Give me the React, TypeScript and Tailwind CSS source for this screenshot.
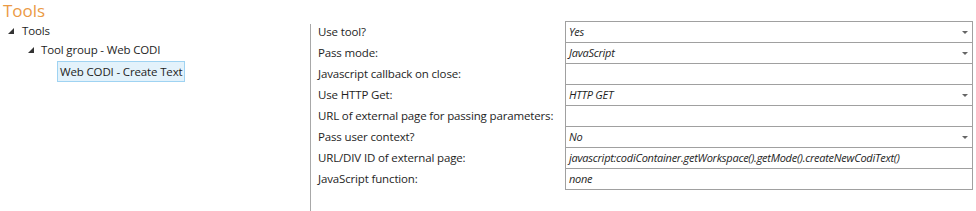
import React from "react";

const rows: { label: string; value: string; dropdown: boolean }[] = [
  { label: "Use tool?", value: "Yes", dropdown: true },
  { label: "Pass mode:", value: "JavaScript", dropdown: true },
  { label: "Javascript callback on close:", value: "", dropdown: false },
  { label: "Use HTTP Get:", value: "HTTP GET", dropdown: true },
  { label: "URL of external page for passing parameters:", value: "", dropdown: false },
  { label: "Pass user context?", value: "No", dropdown: true },
  { label: "URL/DIV ID of external page:", value: "javascript:codiContainer.getWorkspace().getMode().createNewCodiText()", dropdown: false },
  { label: "JavaScript function:", value: "none", dropdown: false },
];

function Expander() {
  return (
    <svg width="6" height="6" viewBox="0 0 6 6" className="shrink-0">
      <polygon points="6,0 6,6 0,6" fill="#333" />
    </svg>
  );
}

function Arrow() {
  return (
    <svg width="6" height="3" viewBox="0 0 6 3" className="shrink-0">
      <polygon points="0,0 6,0 3,3" fill="#666" />
    </svg>
  );
}

export default function App() {
  return (
    <div className="w-[976px] h-[211px] bg-white overflow-hidden text-[#1e1e1e] font-['Open_Sans',sans-serif]">
      <div className="h-[21px] pl-[3px] text-[17px] leading-[22px] text-[#eb9a45]">Tools</div>
      <div className="flex h-[190px]">
        <div className="w-[310px] shrink-0 text-[11.5px] tracking-[-0.15px]">
          <div className="flex items-center h-[19px] pl-[8px] gap-[8px]">
            <Expander />
            <span>Tools</span>
          </div>
          <div className="flex items-center h-[20px] pl-[28px] gap-[7px]">
            <Expander />
            <span>Tool group - Web CODI</span>
          </div>
          <div className="flex items-center h-[22px] pl-[57px]">
            <span className="h-[21px] leading-[19px] px-[2px] border border-[#9fd3f2] bg-[#e3f2fb]">Web CODI - Create Text</span>
          </div>
        </div>
        <div className="w-px bg-[#a8a8a8] mt-[3px] shrink-0" />
        <div className="flex items-start pl-[7px]">
          <div className="w-[247px] text-[11.5px] tracking-[-0.15px]">
            {rows.map((r) => (
              <div key={r.label} className="h-[21px] leading-[21px] whitespace-nowrap">{r.label}</div>
            ))}
          </div>
          <div className="w-[408px] border-l border-t border-r border-[#a0a0a0]">
            {rows.map((r) => (
              <div key={r.label} className="h-[21px] border-b border-[#a0a0a0] flex items-center justify-between pl-[3px] pr-[4px]">
                <span className="italic text-[11px] tracking-[-0.25px] whitespace-nowrap">{r.value}</span>
                {r.dropdown && <Arrow />}
              </div>
            ))}
          </div>
        </div>
      </div>
    </div>
  );
}
